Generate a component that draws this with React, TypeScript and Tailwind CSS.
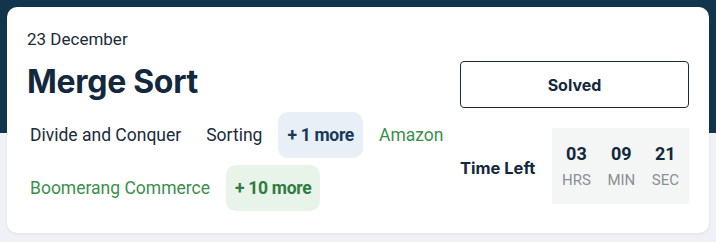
import React from "react";

const body = { fontFamily: "Roboto, 'Liberation Sans', sans-serif" };
const head = { fontFamily: "Inter, 'Liberation Sans', sans-serif" };

function Tag({ children, className = "" }: { children: React.ReactNode; className?: string }) {
  return (
    <div className={`h-[46px] flex items-center px-[9px] rounded-[10px] text-[17.5px] whitespace-nowrap ${className}`} style={body}>
      {children}
    </div>
  );
}

export default function App() {
  return (
    <div className="w-full min-h-[242px] bg-[linear-gradient(to_bottom,#12344d_0px,#12344d_133px,#eff1f6_133px)] pt-[7px] px-[7px] pb-[9px]">
      <div className="bg-white rounded-[10px] shadow-[0_1px_3px_rgba(20,40,80,0.08)] h-[226px] flex pl-[20px] pr-[20px] pt-[22px]">
        <div className="flex-1 flex flex-col">
          <div className="text-[17px] leading-[20px] text-[#1b2b3a]" style={body}>23 December</div>
          <div className="mt-[14px] text-[32px] leading-[38px] font-bold text-[#13283d] tracking-[-0.3px]" style={head}>Merge Sort</div>
          <div className="mt-[11px] ml-[-6px] flex flex-wrap gap-x-[7px] gap-y-[7px] w-[436px]">
            <Tag className="text-[#1b2b3a]">Divide and Conquer</Tag>
            <Tag className="text-[#1b2b3a]">Sorting</Tag>
            <Tag className="bg-[#e8eff6] text-[#173a5a] font-bold tracking-[-0.3px]">+ 1 more</Tag>
            <Tag className="text-[#3a8f4a]">Amazon</Tag>
            <Tag className="text-[#3a8f4a]">Boomerang Commerce</Tag>
            <Tag className="bg-[#e8f3ea] text-[#2f7d3e] font-bold tracking-[-0.3px]">+ 10 more</Tag>
          </div>
        </div>
        <div className="w-[229px] shrink-0 flex flex-col pt-[32px]">
          <div className="h-[47px] border border-[#1c2b3a] rounded-[4px] flex items-center justify-center text-[16px] font-bold text-[#13283d]" style={head}>
            Solved
          </div>
          <div className="mt-[20px] flex items-center justify-between">
            <div className="text-[16.5px] font-bold text-[#13283d] whitespace-nowrap pt-[4px]" style={head}>Time Left</div>
            <div className="h-[76px] w-[137px] bg-[#f4f6f6] flex items-center justify-between px-[10px]" style={body}>
              {[
                ["03", "HRS"],
                ["09", "MIN"],
                ["21", "SEC"],
              ].map(([n, l]) => (
                <div key={l} className="flex flex-col items-center">
                  <div className="text-[18px] leading-[22px] font-bold text-[#13283d]">{n}</div>
                  <div className="mt-[6px] text-[15px] leading-[18px] text-[#8a8f94]">{l}</div>
                </div>
              ))}
            </div>
          </div>
        </div>
      </div>
    </div>
  );
}
